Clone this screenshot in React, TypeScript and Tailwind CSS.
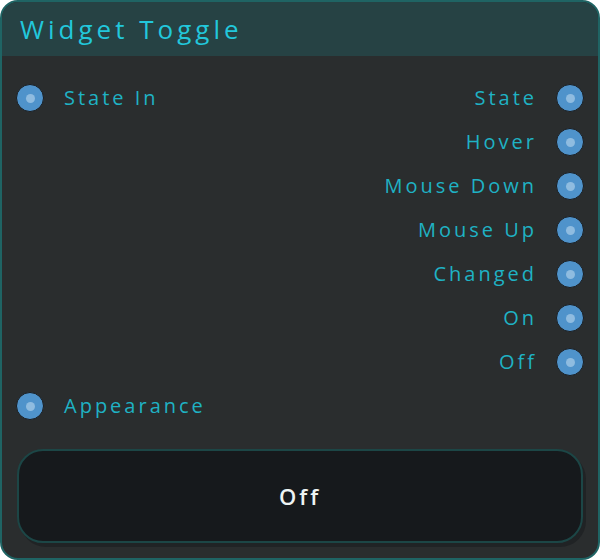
const font = { fontFamily: '"Open Sans", "Noto Sans", sans-serif' };

function Port() {
  return (
    <span className="flex h-[28px] w-[28px] shrink-0 items-center justify-center rounded-full border border-[#1a1d20] bg-[#4f93cb]">
      <span className="h-[9px] w-[9px] rounded-full bg-[#8fbce0]" />
    </span>
  );
}

function InPort({ label, row }: { label: string; row: string }) {
  return (
    <div className={`col-start-1 ${row} flex items-center gap-[20px]`}>
      <Port />
      <span className="text-[20px] tracking-[3px] text-[#1fb2c4]">{label}</span>
    </div>
  );
}

function OutPort({ label, row }: { label: string; row: string }) {
  return (
    <div className={`col-start-2 ${row} flex items-center justify-end gap-[19px]`}>
      <span className="text-[20px] tracking-[3px] text-[#1fb2c4]">{label}</span>
      <Port />
    </div>
  );
}

export default function App() {
  return (
    <div className="h-[560px] w-[600px] bg-white" style={font}>
      <div className="flex h-full w-full flex-col overflow-hidden rounded-[18px] border-2 border-[#1f6464] bg-[#2a2d2e]">
        <div className="flex h-[54px] shrink-0 items-center bg-[#264244] px-[18px]">
          <h1 className="text-[26px] tracking-[4px] text-[#22c7db]">Widget Toggle</h1>
        </div>
        <div className="grid grid-cols-2 auto-rows-[44px] px-[14px] pt-[20px]">
          <InPort label="State In" row="row-start-1" />
          <OutPort label="State" row="row-start-1" />
          <OutPort label="Hover" row="row-start-2" />
          <OutPort label="Mouse Down" row="row-start-3" />
          <OutPort label="Mouse Up" row="row-start-4" />
          <OutPort label="Changed" row="row-start-5" />
          <OutPort label="On" row="row-start-6" />
          <OutPort label="Off" row="row-start-7" />
          <InPort label="Appearance" row="row-start-8" />
        </div>
        <div className="px-[15px] pt-[21px]">
          <button className="flex h-[94px] w-full items-center justify-center rounded-[26px] border-2 border-[#1c4646] bg-[#16191c] text-[22px] font-semibold tracking-[3px] text-[#eef3f3] shadow-[3px_4px_0_#202325]">
            Off
          </button>
        </div>
      </div>
    </div>
  );
}
